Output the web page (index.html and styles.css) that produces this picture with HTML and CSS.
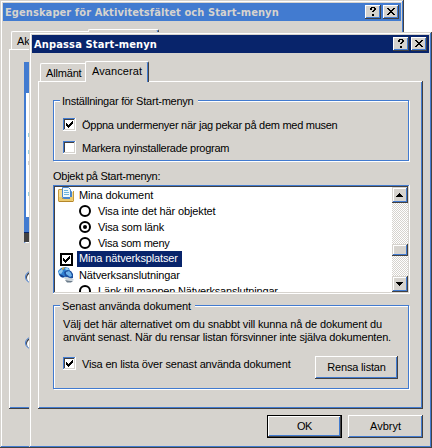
FILE: index.html
```
<!DOCTYPE html>
<html lang="sv">
<head>
<meta charset="utf-8">
<title>Anpassa Start-menyn</title>
<link rel="stylesheet" href="styles.css">
</head>
<body>
<svg width="0" height="0" class="defs">
  <defs>
    <symbol id="help" viewBox="0 0 16 14"><path d="M6 2h4v1h1v2h-1v1h-1v1H7V6h1V5h1V3H7v2H5V3h1zM7 9h2v2H7z"/></symbol>
    <symbol id="close" viewBox="0 0 16 14"><path d="M4 3h2v1h1v1h2V4h1V3h2v1h-1v1h-1v1H9v1h1v1h1v1h1v1h-2V9H9V8H7v1H6v1H4V9h1V8h1V7h1V6H6V5H5V4H4z"/></symbol>
    <symbol id="check" viewBox="0 0 13 13"><path d="M3 5h1v1h1v1h1V6h1V5h1V4h1V3h1v3H9v1H8v1H7v1H6v1H5V9H4V8H3z"/></symbol>
  </defs>
</svg>

<section class="window back">
  <header class="titlebar"><h1 class="t1">Egenskaper för Aktivitetsfältet och Start-menyn</h1>
    <button class="cap"><svg><use href="#help"/></svg></button><button class="cap"><svg><use href="#close"/></svg></button></header>
  <div class="tabs"><div class="tab first">Ak</div><div class="tab active"></div></div>
  <div class="page">
    <div class="preview"><i class="bar"></i><i class="sheet"><b></b><b></b><b class="dim"></b><b></b></i><i class="bar low"></i><i class="foot"></i></div>
    <i class="radio3d"></i><i class="radio3d"></i>
  </div>
</section>

<section class="window front">
  <header class="titlebar"><h1 class="t2">Anpassa Start-menyn</h1>
    <button class="cap"><svg><use href="#help"/></svg></button><button class="cap"><svg><use href="#close"/></svg></button></header>
  <div class="tabs"><div class="tab first"><span class="t3">Allmänt</span></div><div class="tab active"><span class="t4">Avancerat</span></div></div>
  <div class="page">
    <div class="group settings">
      <div class="legend"><span class="t5">Inställningar för Start-menyn</span></div>
      <label class="option"><i class="box"><svg><use href="#check"/></svg></i><span class="t6">Öppna undermenyer när jag pekar på dem med musen</span></label>
      <label class="option"><i class="box"></i><span class="t7">Markera nyinstallerade program</span></label>
    </div>
    <div class="caption"><span class="t8">Objekt på Start-menyn:</span></div>
    <div class="list">
      <div class="rows">
        <div class="row"><svg class="ico" viewBox="0 0 16 16"><path fill="#c79a3a" d="M0 3l1-1h3v9h11V4h1v10l-1 1H1l-1-1z"/><path fill="#f4dc94" d="M1 3h3v9h10V5h1v9H1z"/><path fill="#fff" stroke="#4a86cc" d="M5.500 2.500h6l2 2v7h-8z"/><path fill="#eef8fc" stroke="#4a86cc" d="M4.500 0.500h6l2 2v8h-8z"/><path stroke="#6fb4dc" d="M6 3.500h4M6 5.500h5M6 7.500h5"/><path fill="#eccb70" d="M1 10h3v2h8v-2h3v3l-1 1H1z"/><path fill="#b5872a" d="M1 14h14v1H1z"/></svg><span class="t9">Mina dokument</span></div>
        <div class="row sub"><i class="radio"></i><span class="t10">Visa inte det här objektet</span></div>
        <div class="row sub"><i class="radio on"></i><span class="t11">Visa som länk</span></div>
        <div class="row sub"><i class="radio"></i><span class="t12">Visa som meny</span></div>
        <div class="row"><i class="flat"><svg><use href="#check"/></svg></i><span class="selected"><span class="t13">Mina nätverksplatser</span></span></div>
        <div class="row"><svg class="ico" viewBox="0 0 16 16"><path fill="#2f7fd0" d="M3 1l4-1 4 1 1 3-1 5-4 2-4-1-2-2-1-4z"/><path fill="#8ec8ef" d="M1 4l3-2 1 2-2 3-2-1zM7 1l3 0 1 2-3 1z"/><path fill="#d2a640" d="M4 1l3-1-1 2-2 1z"/><path fill="#153f8d" d="M1 7l3 1 3 2v1l-4-1z"/><path fill="#1d4f9e" d="M6 5l3-2 4 1 2 3v4l-3 1-5-3z"/><path fill="#6eb2ea" d="M8 5l3-1 2 2 1 3-2 1-4-3z"/><path fill="#c9d3da" d="M5 10l4 0 6 2 1 1-2 1-6-1z"/><path fill="#6b7c8b" d="M7 13l6 1 2 0-2 1.500H9z"/></svg><span class="t14">Nätverksanslutningar</span></div>
        <div class="row sub"><i class="radio"></i><span class="t15">Länk till mappen Nätverksanslutningar</span></div>
      </div>
      <div class="scroll"><i class="sbtn"><svg viewBox="0 0 16 16"><path d="M7 6h1v1h1v1h1v1h1v1H4V9h1V8h1V7h1z"/></svg></i><i class="thumb"></i><i class="sbtn"><svg viewBox="0 0 16 16"><path d="M4 6h7v1h-1v1H9v1H8v1H7V9H6V8H5V7H4z"/></svg></i></div>
    </div>
    <div class="group recent">
      <div class="legend"><span class="t16">Senast använda dokument</span></div>
      <p><span class="t17">Välj det här alternativet om du snabbt vill kunna nå de dokument du</span><br><span class="t18">använt senast. När du rensar listan försvinner inte själva dokumenten.</span></p>
      <div class="line"><label class="option"><i class="box"><svg><use href="#check"/></svg></i><span class="t19">Visa en lista över senast använda dokument</span></label><button class="btn clear"><span class="t20">Rensa listan</span></button></div>
    </div>
  </div>
  <footer class="actions"><button class="btn default"><span class="t21">OK</span></button><button class="btn"><span class="t22">Avbryt</span></button></footer>
</section>
</body>
</html>
```
FILE: styles.css
```
:root { --face: #d6d3ce; --blue: #427bd0; --dark: #424142; --navy: #08246b; }
* { box-sizing: border-box; }
body { margin: 0; width: 432px; height: 448px; overflow: hidden; position: relative; background: #fff; color: #000; font: 11px/13px "Liberation Sans", Arial, sans-serif; white-space: nowrap; }
i { display: block; flex: none; font-style: normal; }
svg { display: block; flex: none; shape-rendering: crispEdges; }
.defs { position: absolute; }
button { font: inherit; color: #000; border: 0; padding: 0; margin: 0; background: var(--face); }

.window { position: absolute; isolation: isolate; padding: 3px; background: var(--face); box-shadow: inset -1px -1px var(--dark), inset 1px 1px var(--face), inset -2px -2px var(--blue), inset 2px 2px #fff; }
.back { left: 0; top: 0; width: 404px; height: 448px; }
.front { left: 29px; top: 32px; width: 403px; height: 416px; }
.titlebar { display: flex; height: 18px; padding: 2px 2px 0 2px; background: var(--navy); color: #fff; }
.back .titlebar { background: var(--blue); color: var(--face); }
.titlebar h1 { flex: 1; margin: 0; font: bold 11px/16px "DejaVu Sans Condensed", "DejaVu Sans", sans-serif; font-stretch: condensed; }
.cap { width: 16px; height: 14px; margin-left: 2px; box-shadow: inset -1px -1px var(--dark), inset 1px 1px #fff, inset -2px -2px var(--blue); }
.cap svg { width: 16px; height: 14px; }

.tabs { display: flex; align-items: flex-end; height: 20px; margin: 8px 0 0 8px; }
.tab { height: 18px; border: 1px solid #fff; border-width: 1px 0 0 1px; border-radius: 2px 0 0 0; padding: 3px 0 0 5px; }
.tab.first { width: 45px; }
.tab.active { width: 64px; height: 21px; margin-bottom: -1px; padding: 3px 0 0 6px; position: relative; z-index: 1; background: var(--face); border-right: 1px solid var(--dark); border-radius: 2px 2px 0 0; box-shadow: inset -1px 0 var(--blue); }
.page { width: 385px; height: 328px; margin-left: 6px; padding: 19px 14px 0 15px; box-shadow: inset -1px -1px var(--dark), inset 1px 1px #fff, inset -2px -2px var(--blue); }

.back .tab.first { width: 77px; overflow: hidden; }
.back .tab.active { width: 71px; }
.back .page { height: 360px; padding: 13px 0 0 15px; }
.preview { width: 40px; height: 181px; border: solid var(--blue); border-width: 0 0 0 2px; border-bottom: 1px solid #fff; }
.bar { height: 31px; background: var(--blue); }
.sheet { height: 124px; padding: 40px 0 0 2px; background: #fff; }
.sheet b { display: block; width: 1px; height: 4px; margin-bottom: 13px; background: #9bd0dd; }
.sheet b:nth-child(2) { margin-bottom: 7px; }
.sheet b.dim { background: #d0d0d0; margin-bottom: 27px; }
.bar.low { height: 15px; }
.foot { height: 10px; margin-left: -2px; background: var(--dark); border-top: 1px solid var(--navy); }
.radio3d { width: 12px; height: 12px; margin: 28px 0 0 1px; border-radius: 50%; background: #fff; border: 1px solid var(--blue); box-shadow: inset 1px 1px var(--dark); }
.radio3d + .radio3d { margin-top: 54px; }

.group { width: 356px; border: 1px solid var(--blue); box-shadow: inset 1px 1px #fff, 1px 1px #fff; padding-left: 9px; }
.legend { width: max-content; height: 13px; margin: -7px 0 0 -3px; padding: 1px 4px 0 2px; background: var(--face); }
.settings { height: 61px; }
.option { display: flex; gap: 6px; height: 13px; }
.option span { line-height: 15px; }
.settings .option { margin-top: 11px; }
.settings .option + .option { margin-top: 10px; }
.box { width: 13px; height: 13px; background: #fff; box-shadow: inset -1px -1px #fff, inset 1px 1px var(--blue), inset -2px -2px var(--face), inset 2px 2px var(--dark); }
.box svg, .flat svg { width: 13px; height: 13px; }
.caption { height: 13px; margin: 9px 0 2px; }

.list { display: flex; width: 357px; height: 109px; padding: 2px; background: #fff; box-shadow: inset -1px -1px #fff, inset 1px 1px var(--blue), inset -2px -2px var(--face), inset 2px 2px var(--dark); }
.rows { flex: 1; overflow: hidden; height: 105px; }
.row { display: flex; align-items: center; height: 16px; padding-left: 3px; }
.ico { width: 16px; height: 16px; margin-right: 5px; shape-rendering: auto; }
.row.sub { padding-left: 24px; }
.radio { width: 12px; height: 12px; margin-right: 7px; border: 2px solid #000; border-radius: 50%; padding: 2px; }
.radio.on::before { content: ""; display: block; width: 4px; height: 4px; background: #000; border-radius: 50%; }
.flat { width: 13px; height: 13px; margin: 1px 4px 0 2px; box-shadow: inset 0 0 0 2px #000; }
.selected { width: 105px; height: 16px; padding: 1px 0 0 2px; background: var(--navy); color: #fff; }
.scroll { display: flex; flex-direction: column; width: 16px; background: repeating-conic-gradient(var(--face) 0 25%, #fff 0 50%) 0 0 / 2px 2px; }
.sbtn, .thumb { width: 16px; height: 16px; background: var(--face); box-shadow: inset -1px -1px var(--dark), inset 1px 1px var(--face), inset -2px -2px var(--blue), inset 2px 2px #fff; }
.thumb { height: 12px; margin: 41px 0 20px; }

.recent { height: 84px; margin-top: 11px; }
.recent p { margin: 6px 0 0; }
.line { display: flex; margin-top: 12px; }
.line .option { width: 252px; margin-top: 1px; }
.btn { width: 75px; height: 23px; line-height: 13px; box-shadow: inset -1px -1px var(--dark), inset 1px 1px #fff, inset -2px -2px var(--blue); }
.clear { width: 83px; }
.default { box-shadow: inset 0 0 0 1px #000, inset -2px -2px var(--dark), inset 2px 2px #fff, inset -3px -3px var(--blue); }
.actions { display: flex; justify-content: flex-end; gap: 6px; padding: 6px 6px 0 0; }

/* letter fitting */
.t1 { letter-spacing: .09px; }
.t2 { letter-spacing: .15px; }
.t3, .t11, .t20 { letter-spacing: -.17px; }
.t4 { letter-spacing: .1px; }
.t5 { letter-spacing: -.23px; }
.t6, .t7, .t8 { letter-spacing: -.27px; }
.t9, .t16 { letter-spacing: -.08px; }
.t10, .t13, .t14 { letter-spacing: -.13px; }
.t12 { letter-spacing: -.27px; }
.t15, .t18 { letter-spacing: -.18px; }
.t17 { letter-spacing: -.14px; }
.t19 { letter-spacing: -.17px; }
.t21 { letter-spacing: -.4px; }
```
